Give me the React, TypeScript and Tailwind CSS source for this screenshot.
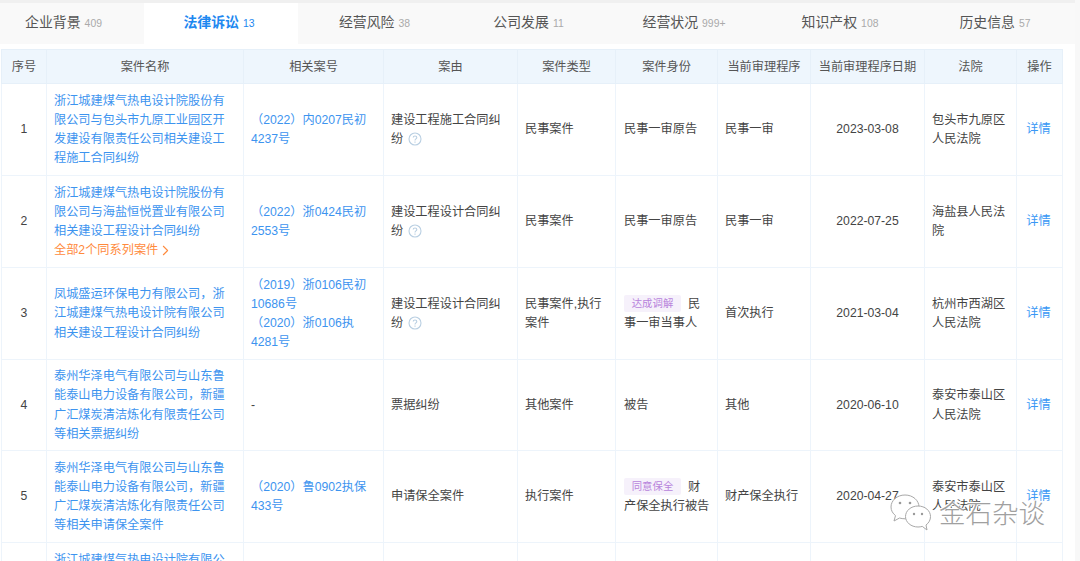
import { ChevronRight } from "lucide-react";
import type { ReactNode } from "react";

const tabs = [
  { name: "企业背景", count: "409", cls: "w-[144px] pr-[17px]" },
  { name: "法律诉讼", count: "13", cls: "w-[154px] pr-[4px]", active: true },
  { name: "经营风险", count: "38", cls: "w-[153px]" },
  { name: "公司发展", count: "11", cls: "w-[155px]" },
  { name: "经营状况", count: "999+", cls: "w-[156px]" },
  { name: "知识产权", count: "108", cls: "w-[156px]" },
  { name: "历史信息", count: "57", cls: "w-[154px]" },
];

const headers = [
  { label: "序号", cls: "w-[45px]" },
  { label: "案件名称", cls: "w-[197px]" },
  { label: "相关案号", cls: "w-[140px]" },
  { label: "案由", cls: "w-[134px]" },
  { label: "案件类型", cls: "w-[98px]" },
  { label: "案件身份", cls: "w-[102px]" },
  { label: "当前审理程序", cls: "w-[93px]" },
  { label: "当前审理程序日期", cls: "w-[114px]" },
  { label: "法院", cls: "w-[92px]" },
  { label: "操作", cls: "w-[46px]" },
];

function Help() {
  return (
    <svg viewBox="0 0 14 14" className="ml-[5px] inline-block h-[14px] w-[14px] align-[-3px]" fill="none" stroke="#b9cfe2">
      <circle cx="7" cy="7" r="6" strokeWidth="1.100" />
      <path d="M5.200 5.600c0-1 .8-1.600 1.800-1.600s1.800.7 1.800 1.600c0 1.300-1.800 1.300-1.800 2.800" strokeWidth="1.100" />
      <path d="M7 9.600v1.100" strokeWidth="1.100" />
    </svg>
  );
}

function Tag({ children }: { children: ReactNode }) {
  return (
    <span className="mr-[7px] inline-block h-[17px] w-[57px] rounded-[2px] bg-[#f6f1fb] text-center align-[1px] text-[10.4px] leading-[17px] text-[#b884dc]">
      {children}
    </span>
  );
}

const rows: {
  no: string;
  name: string;
  series?: string;
  nums: string[];
  cause: string;
  help?: boolean;
  type: string;
  tag?: string;
  role: string;
  stage: string;
  date: string;
  court: string;
  h: string;
}[] = [
  {
    no: "1",
    name: "浙江城建煤气热电设计院股份有限公司与包头市九原工业园区开发建设有限责任公司相关建设工程施工合同纠纷",
    nums: ["（2022）内0207民初4237号"],
    cause: "建设工程施工合同纠纷",
    help: true,
    type: "民事案件",
    role: "民事一审原告",
    stage: "民事一审",
    date: "2023-03-08",
    court: "包头市九原区人民法院",
    h: "h-[92px]",
  },
  {
    no: "2",
    name: "浙江城建煤气热电设计院股份有限公司与海盐恒悦置业有限公司相关建设工程设计合同纠纷",
    series: "全部2个同系列案件",
    nums: ["（2022）浙0424民初2553号"],
    cause: "建设工程设计合同纠纷",
    help: true,
    type: "民事案件",
    role: "民事一审原告",
    stage: "民事一审",
    date: "2022-07-25",
    court: "海盐县人民法院",
    h: "h-[92px]",
  },
  {
    no: "3",
    name: "凤城盛运环保电力有限公司，浙江城建煤气热电设计院有限公司相关建设工程设计合同纠纷",
    nums: ["（2019）浙0106民初10686号", "（2020）浙0106执4281号"],
    cause: "建设工程设计合同纠纷",
    help: true,
    type: "民事案件,执行案件",
    tag: "达成调解",
    role: "民事一审当事人",
    stage: "首次执行",
    date: "2021-03-04",
    court: "杭州市西湖区人民法院",
    h: "h-[92px]",
  },
  {
    no: "4",
    name: "泰州华泽电气有限公司与山东鲁能泰山电力设备有限公司，新疆广汇煤炭清洁炼化有限责任公司等相关票据纠纷",
    nums: [],
    cause: "票据纠纷",
    type: "其他案件",
    role: "被告",
    stage: "其他",
    date: "2020-06-10",
    court: "泰安市泰山区人民法院",
    h: "h-[91px]",
  },
  {
    no: "5",
    name: "泰州华泽电气有限公司与山东鲁能泰山电力设备有限公司，新疆广汇煤炭清洁炼化有限责任公司等相关申请保全案件",
    nums: ["（2020）鲁0902执保433号"],
    cause: "申请保全案件",
    type: "执行案件",
    tag: "同意保全",
    role: "财产保全执行被告",
    stage: "财产保全执行",
    date: "2020-04-27",
    court: "泰安市泰山区人民法院",
    h: "h-[92px]",
  },
];

const cell = "border border-[#edf4fb] pt-[1px] pb-0 align-middle";
const td = `${cell} pr-[7px] pl-[7px]`;

export default function App() {
  return (
    <div className="relative flex h-[561px] w-[1080px] overflow-hidden bg-white font-['Liberation_Sans','Noto_Sans_CJK_SC',sans-serif] text-[12.2px] leading-[19.25px] text-[#444]">
      <div className="w-[1075px] shrink-0">
        <div className="h-[3px] bg-[#f0f0f0]" />
        <div className="flex h-[41px] bg-[#f9f9f9]">
          {tabs.map((t) => (
            <div key={t.name} className={`flex items-baseline justify-center leading-[38px] ${t.cls} ${t.active ? "bg-white" : ""}`}>
              <span className={t.active ? "text-[13.9px] font-bold text-[#1e88f0]" : "text-[13.9px] text-[#555]"}>{t.name}</span>
              <span className={t.active ? "ml-[4px] text-[10.4px] text-[#1e88f0]" : "ml-[4px] text-[10.4px] text-[#aaa]"}>{t.count}</span>
            </div>
          ))}
        </div>

        <table className="mt-[5px] ml-[1px] w-[1062px] table-fixed border-collapse">
          <thead>
            <tr className="h-[34px] bg-[#eef6fd]">
              {headers.map((h) => (
                <th key={h.label} className={`${h.cls} border border-[#e6f0f9] p-0 pt-[3px] text-center font-normal text-[#555]`}>
                  {h.label}
                </th>
              ))}
            </tr>
          </thead>
          <tbody>
            {rows.map((r) => (
              <tr key={r.no} className={r.h}>
                <td className={`${td} text-center`}>{r.no}</td>
                <td className={td}>
                  <span className="text-[#3d94ef]">{r.name}</span>
                  {r.series && (
                    <div className="flex items-center text-[#ff8a3c]">
                      {r.series}
                      <ChevronRight className="-ml-[1px] h-[17px] w-[17px]" strokeWidth={1.500} />
                    </div>
                  )}
                </td>
                <td className={`${td} text-[#3d94ef]`}>
                  {r.nums.length === 0 ? <span className="text-[#444]">-</span> : r.nums.map((n) => <div key={n}>{n}</div>)}
                </td>
                <td className={td}>
                  {r.cause}
                  {r.help && <Help />}
                </td>
                <td className={td}>{r.type}</td>
                <td className={`${cell} pr-[6px] pl-[8px]`}>
                  {r.tag && <Tag>{r.tag}</Tag>}
                  {r.role}
                </td>
                <td className={td}>{r.stage}</td>
                <td className={`${td} text-center`}>{r.date}</td>
                <td className={td}>{r.court}</td>
                <td className={`${cell} pr-[8px] pl-[6px] text-center text-[#3a98f5]`}>详情</td>
              </tr>
            ))}
            <tr className="h-[92px]">
              <td className={td} />
              <td className={`${cell} !align-top pt-[8px] pr-[7px] pl-[7px] text-[#3d94ef]`}>浙江城建煤气热电设计院有限公</td>
              <td className={td} />
              <td className={td} />
              <td className={td} />
              <td className={td} />
              <td className={td} />
              <td className={td} />
              <td className={td} />
              <td className={td} />
            </tr>
          </tbody>
        </table>
      </div>
      <div className="flex-1 bg-[#f8f8f8]" />

      {/* wechat watermark */}
      <div className="absolute top-[494px] left-[889px] flex items-center">
        <svg viewBox="0 0 44 37" className="h-[37px] w-[44px]" fill="#fff" stroke="#a8a8a8" strokeWidth="1">
          <path d="M16 1C8 1 2 6.500 2 13c0 3.500 1.800 6.500 4.500 8.600L5 27l5.500-3c1.700.5 3.500.8 5.500.8 8 0 14-5.300 14-11.800S24 1 16 1z" />
          <circle cx="11" cy="9" r="1.300" fill="#999" stroke="none" />
          <circle cx="21" cy="9" r="1.300" fill="#999" stroke="none" />
          <path d="M29 12c-7 0-12.500 4.700-12.500 10.500S22 33 29 33c1.500 0 3-.2 4.300-.6L38 36l-1-5c2.800-2 4.500-5 4.500-8.500C41.500 16.700 36 12 29 12z" />
          <circle cx="25" cy="20" r="1.200" fill="#999" stroke="none" />
          <circle cx="33" cy="20" r="1.200" fill="#999" stroke="none" />
        </svg>
      </div>
      <div className="absolute top-[498px] left-[939px] text-[26.5px] leading-[32px] font-light whitespace-nowrap text-[#a0a0a0] [text-shadow:0_0_2px_#fff,1px_1px_0_#fff,-1px_-1px_0_#fff]">
        金石杂谈
      </div>
    </div>
  );
}
